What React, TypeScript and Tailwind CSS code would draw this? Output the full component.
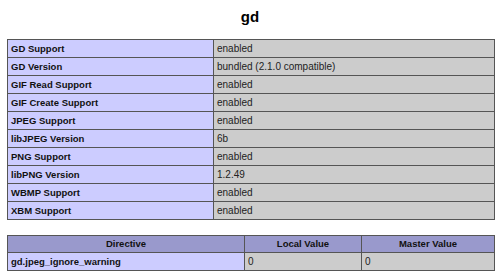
const rows: [string, string][] = [
  ["GD Support", "enabled"],
  ["GD Version", "bundled (2.1.0 compatible)"],
  ["GIF Read Support", "enabled"],
  ["GIF Create Support", "enabled"],
  ["JPEG Support", "enabled"],
  ["libJPEG Version", "6b"],
  ["PNG Support", "enabled"],
  ["libPNG Version", "1.2.49"],
  ["WBMP Support", "enabled"],
  ["XBM Support", "enabled"],
];

export default function App() {
  return (
    <div className="w-[500px] h-[280px] bg-white px-[7px] pt-[8px] font-['Liberation_Sans',Arial,sans-serif] text-black">
      <h2 className="text-center text-[15px] font-bold leading-[18px] mb-[13px]">gd</h2>

      <table className="w-[488px] border-collapse">
        <tbody>
          {rows.map(([k, v]) => (
            <tr key={k} className="h-[18px]">
              <td className="w-[206px] border border-[#555] bg-[#ccccff] pl-[3px] text-[9.5px] font-bold leading-none text-[#111]">
                {k}
              </td>
              <td className="border border-[#555] bg-[#cccccc] pl-[3px] text-[10px] leading-none text-[#222]">
                {v}
              </td>
            </tr>
          ))}
        </tbody>
      </table>

      <table className="w-[488px] border-collapse mt-[15px]">
        <thead>
          <tr className="h-[17px] bg-[#9999cc]">
            <th className="w-[237px] border border-[#555] text-[9.5px] font-bold leading-none text-[#111]">Directive</th>
            <th className="w-[117px] border border-[#555] text-[9.5px] font-bold leading-none text-[#111]">Local Value</th>
            <th className="border border-[#555] text-[9.5px] font-bold leading-none text-[#111]">Master Value</th>
          </tr>
        </thead>
        <tbody>
          <tr className="h-[18px]">
            <td className="border border-[#555] bg-[#ccccff] pl-[3px] text-[9.5px] font-bold leading-none text-[#111]">
              gd.jpeg_ignore_warning
            </td>
            <td className="border border-[#555] bg-[#cccccc] pl-[3px] text-[10px] leading-none text-[#222]">0</td>
            <td className="border border-[#555] bg-[#cccccc] pl-[3px] text-[10px] leading-none text-[#222]">0</td>
          </tr>
        </tbody>
      </table>
    </div>
  );
}
